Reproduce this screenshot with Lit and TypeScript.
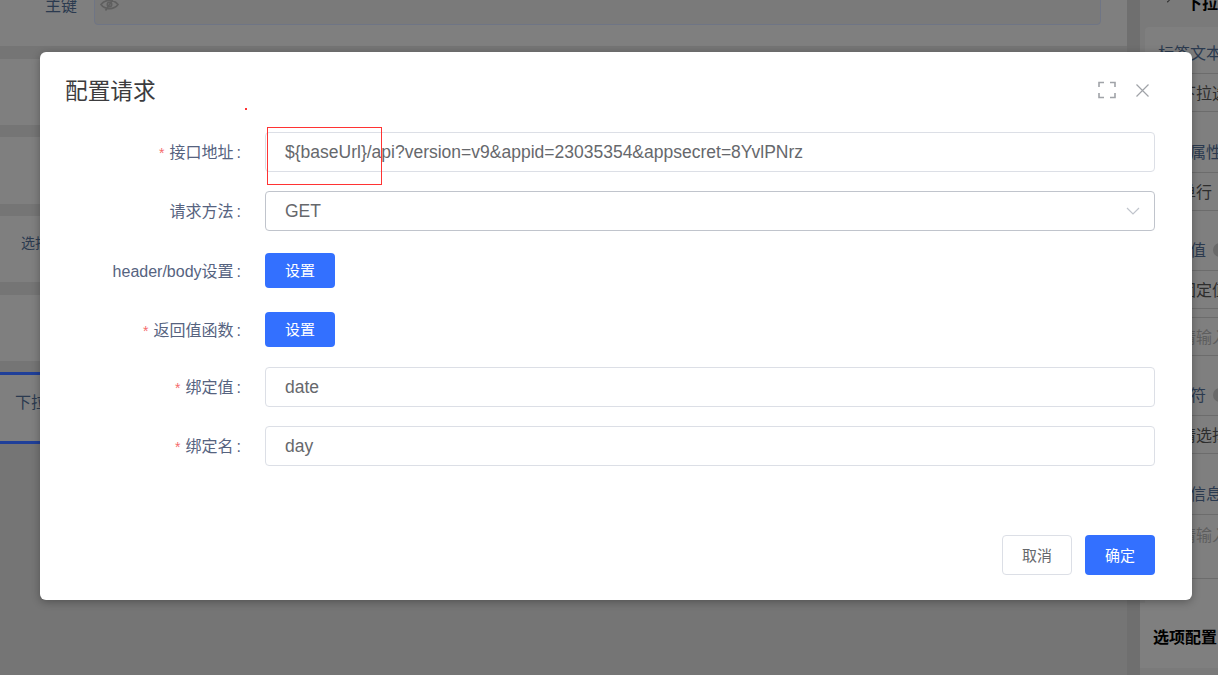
import { LitElement, html, css } from "lit";
import { customElement } from "lit/decorators.js";

const SANS = css`"Liberation Sans", "Noto Sans CJK SC", sans-serif`;

@customElement("app-root")
export class AppRoot extends LitElement {
  static styles = css`
    :host { display: block; width: 1218px; height: 675px; overflow: hidden; position: relative; font-family: ${SANS}; background: #757575; }
    * { box-sizing: border-box; }

    /* backdrop */
    .page { display: flex; height: 675px; overflow: hidden; }
    .main { width: 1127px; flex: none; display: flex; flex-direction: column; gap: 12px; margin-top: -20px; }
    .gutter { width: 13px; flex: none; background: #6f6f6f; }
    .card { background: #7f7f7f; height: 66px; flex: none; display: flex; align-items: center; font-size: 16px; color: #2b3a4f; }
    .card.tall { height: 67px; }
    .card.shift { margin-top: 1px; }
    .card.key { padding: 0 26px 0 45px; align-items: flex-start; gap: 17px; }
    .card.key span { margin-top: 17px; line-height: 18px; }
    .fake-input { flex: 1; height: 45px; border: 1px solid #6f7585; border-radius: 4px; background: #7a7a7a; padding: 17px 5px 0; }
    .fake-input svg { display: block; }
    .card.pick { padding: 0 0 14px 21px; font-size: 14px; }
    .card.tab { height: 72px; margin-top: -1px; border-top: 3px solid #1f3f99; border-bottom: 3px solid #1f3f99; padding: 0 0 14px 15px; }
    .side { flex: 1; min-width: 0; background: #7a7a7a; display: flex; flex-direction: column; overflow: hidden; }
    .side-head { height: 27px; padding: 0 0 13px 29px; font-size: 16px; font-weight: 700; color: #000; display: flex; align-items: flex-end; gap: 16px; white-space: nowrap; }
    .side-head i { width: 6px; height: 6px; border-bottom: 1px solid #333; border-right: 1px solid #333; transform: rotate(45deg); margin-bottom: 11px; }
    .side-form { margin-left: 5px; background: #7f7f7f; flex: none; height: 576px; padding-left: 13px; white-space: nowrap; border-top-left-radius: 4px; }
    .lbl { height: 60px; font-size: 16px; color: #2b3a4f; line-height: 38px; display: flex; gap: 7px; align-items: flex-end; }
    .lbl.first { height: 46px; }
    .lbl.short { height: 59px; }
    .val { height: 39px; font-size: 16px; color: #2d2d2d; line-height: 39px; padding-left: 22px; border-top: 1px solid #6c6c6c; border-bottom: 1px solid #6c6c6c; }
    .val.ph { color: #5e5e5e; }
    .val.area { height: 65px; line-height: 41px; }
    .spacer { height: 8px; }
    .tip { width: 14px; height: 14px; border-radius: 50%; background: #6a6a6a; flex: none; margin-bottom: 13px; }
    .side-title { height: 65px; background: #7f7f7f; padding-left: 13px; font-size: 16px; font-weight: 700; color: #000; display: flex; align-items: center; white-space: nowrap; flex: none; }

    /* dialog */
    .dialog { position: absolute; left: 40px; top: 52px; width: 1152px; height: 548px; background: #fff; border-radius: 6px; box-shadow: 0 2px 8px rgba(0,0,0,.3); display: flex; flex-direction: column; }
    .head { height: 80px; flex: none; padding: 24px 43px 0 25px; display: flex; justify-content: space-between; align-items: flex-start; }
    .title { font-size: 22.7px; line-height: 30px; color: #3c3c3e; }
    .tools { display: flex; gap: 20px; margin-top: 5px; align-items: center; }
    .tools svg { display: block; }
    form { flex: 1; display: flex; flex-direction: column; gap: 19px; padding-right: 37px; }
    .row { display: flex; align-items: center; height: 40px; flex: none; }
    .row.b1 { height: 41px; }
    .row.b2 { height: 35px; margin-top: 2px; margin-bottom: 1px; }
    .label { width: 225px; flex: none; padding: 0 24px 2px 0; text-align: right; font-size: 16px; color: #56637f; white-space: nowrap; }
    .label b { color: #f56c6c; font-weight: 400; margin-right: 5px; font-size: 14px; }
    .label em { font-style: normal; margin-left: 3px; }
    .input { flex: 1; height: 40px; border: 1px solid #dcdfe6; border-radius: 4px; padding: 0 19px; font-size: 17.5px; line-height: 38px; color: #66686c; display: flex; justify-content: space-between; align-items: center; white-space: nowrap; }
    .input.sel { border-color: #c0c4cc; }
    .input svg { margin-right: -5px; }
    .btn { height: 35px; width: 70px; border: 0; border-radius: 4px; background: #3370ff; color: #fff; font: 15px ${SANS}; padding: 0 0 2px; }
    .foot { height: 65px; flex: none; display: flex; justify-content: flex-end; gap: 13px; padding-right: 37px; }
    .foot button { height: 40px; width: 70px; border-radius: 4px; font: 15px ${SANS}; padding: 0 0 2px; }
    .cancel { background: #fff; border: 1px solid #dcdfe6; color: #66686c; }
    .ok { background: #3370ff; border: 0; color: #fff; }

    /* red annotation marks on the screenshot */
    .mark-box { position: absolute; left: 267px; top: 127px; width: 115px; height: 58px; border: 1px solid #f33; }
    .mark-dot { position: absolute; left: 245px; top: 108px; width: 2px; height: 2px; background: #f33; }
  `;

  render() {
    const close = html`<svg width="13" height="13" viewBox="0 0 13 13" fill="none" stroke="#a0a3a8" stroke-width="1.2"><path d="M.5 .5 L12.5 12.5 M12.5 .5 L.5 12.5"/></svg>`;
    const full = html`<svg width="18" height="18" viewBox="0 0 18 18" fill="none" stroke="#a0a3a8" stroke-width="1.6"><path d="M1 6V1.5H6 M12 1.5H17V6 M17 12V16.5H12 M6 16.5H1V12"/></svg>`;
    const chevron = html`<svg width="14" height="8" viewBox="0 0 14 8" fill="none" stroke="#c0c4cc" stroke-width="1.2"><path d="M1 1 L7 7 L13 1"/></svg>`;
    return html`
      <div class="page">
        <div class="main">
          <div class="card key"><span>主键</span><div class="fake-input">
            <svg width="19" height="13" viewBox="0 0 19 13" fill="none" stroke="#5f5f5f" stroke-width="1.6"><path d="M1 6.5 C5 1 14 1 18 6.5 C14 12 5 12 1 6.5Z M5.5 12.5 L13.5 .5"/><circle cx="9.5" cy="6.5" r="2.2"/></svg>
          </div></div>
          <div class="card shift"></div>
          <div class="card tall"></div>
          <div class="card pick">选择</div>
          <div class="card shift"></div>
          <div class="card tab">下拉</div>
        </div>
        <div class="gutter"></div>
        <div class="side">
          <div class="side-head"><i></i><span>下拉</span></div>
          <div class="side-form">
            <div class="lbl first">标签文本</div>
            <div class="val">下拉选择</div>
            <div class="lbl">绑定属性</div>
            <div class="val">单行</div>
            <div class="lbl short">默认值<span class="tip"></span></div>
            <div class="val">固定值</div>
            <div class="spacer"></div>
            <div class="val ph">请输入</div>
            <div class="lbl short">占位符<span class="tip"></span></div>
            <div class="val">请选择</div>
            <div class="lbl">提示信息</div>
            <div class="val ph area">请输入</div>
          </div>
          <div class="side-title">选项配置</div>
        </div>
      </div>

      <div class="dialog">
        <div class="head">
          <div class="title">配置请求</div>
          <div class="tools">${full}${close}</div>
        </div>
        <form>
          <div class="row"><div class="label"><b>*</b>接口地址<em>:</em></div><div class="input">\${baseUrl}/api?version=v9&amp;appid=23035354&amp;appsecret=8YvlPNrz</div></div>
          <div class="row"><div class="label">请求方法<em>:</em></div><div class="input sel">GET ${chevron}</div></div>
          <div class="row b1"><div class="label">header/body设置<em>:</em></div><button type="button" class="btn">设置</button></div>
          <div class="row b2"><div class="label"><b>*</b>返回值函数<em>:</em></div><button type="button" class="btn">设置</button></div>
          <div class="row"><div class="label"><b>*</b>绑定值<em>:</em></div><div class="input">date</div></div>
          <div class="row"><div class="label"><b>*</b>绑定名<em>:</em></div><div class="input">day</div></div>
        </form>
        <div class="foot"><button type="button" class="cancel">取消</button><button type="button" class="ok">确定</button></div>
      </div>
      <div class="mark-box"></div>
      <div class="mark-dot"></div>
    `;
  }
}
